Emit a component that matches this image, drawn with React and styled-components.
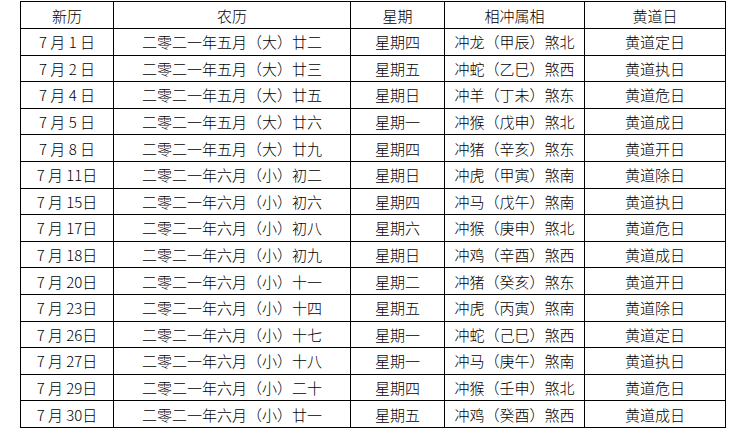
import React from 'react';
import styled, { createGlobalStyle } from 'styled-components';

const GlobalStyle = createGlobalStyle`
  html, body {
    margin: 0;
    padding: 0;
    background: #fff;
  }
`;

const Page = styled.main`
  padding: 1px 0 0 20px;
`;

const Table = styled.table`
  border-collapse: collapse;
  table-layout: fixed;
  width: 706px;
  font-family: "Noto Sans CJK SC", "Liberation Sans", sans-serif;
  font-size: 15px;
  font-weight: 300;
  color: #000;
`;

const Cell = styled.td`
  border: 1px solid #000;
  height: ${(p) => (p.$head ? '26px' : '25.6px')};
  padding: 0;
  text-align: center;
  vertical-align: middle;
  line-height: 1;
  white-space: nowrap;
  font-weight: 300;
`;

const widths = [93, 237, 94, 140, 141];
const head = ['新历', '农历', '星期', '相冲属相', '黄道日'];

const rows = [
  ['7月1日', '二零二一年五月（大）廿二', '星期四', '冲龙（甲辰）煞北', '黄道定日'],
  ['7月2日', '二零二一年五月（大）廿三', '星期五', '冲蛇（乙巳）煞西', '黄道执日'],
  ['7月4日', '二零二一年五月（大）廿五', '星期日', '冲羊（丁未）煞东', '黄道危日'],
  ['7月5日', '二零二一年五月（大）廿六', '星期一', '冲猴（戊申）煞北', '黄道成日'],
  ['7月8日', '二零二一年五月（大）廿九', '星期四', '冲猪（辛亥）煞东', '黄道开日'],
  ['7月11日', '二零二一年六月（小）初二', '星期日', '冲虎（甲寅）煞南', '黄道除日'],
  ['7月15日', '二零二一年六月（小）初六', '星期四', '冲马（戊午）煞南', '黄道执日'],
  ['7月17日', '二零二一年六月（小）初八', '星期六', '冲猴（庚申）煞北', '黄道危日'],
  ['7月18日', '二零二一年六月（小）初九', '星期日', '冲鸡（辛酉）煞西', '黄道成日'],
  ['7月20日', '二零二一年六月（小）十一', '星期二', '冲猪（癸亥）煞东', '黄道开日'],
  ['7月23日', '二零二一年六月（小）十四', '星期五', '冲虎（丙寅）煞南', '黄道除日'],
  ['7月26日', '二零二一年六月（小）十七', '星期一', '冲蛇（己巳）煞西', '黄道定日'],
  ['7月27日', '二零二一年六月（小）十八', '星期一', '冲马（庚午）煞南', '黄道执日'],
  ['7月29日', '二零二一年六月（小）二十', '星期四', '冲猴（壬申）煞北', '黄道危日'],
  ['7月30日', '二零二一年六月（小）廿一', '星期五', '冲鸡（癸酉）煞西', '黄道成日'],
];

// digits in the date column are spaced out like a half-width Song font
const fmtDate = (d) => d.replace(/^(\d+)月(\d+)日$/, '$1 月 $2 日').replace(/ (\d\d) /, ' $1');

export default function App() {
  return (
    <>
      <GlobalStyle />
      <Page>
        <Table>
          <colgroup>
            {widths.map((w, i) => (
              <col key={i} style={{ width: w }} />
            ))}
          </colgroup>
          <thead>
            <tr>
              {head.map((h) => (
                <Cell as="th" key={h} $head>
                  {h}
                </Cell>
              ))}
            </tr>
          </thead>
          <tbody>
            {rows.map((r) => (
              <tr key={r[0]}>
                {r.map((c, i) => (
                  <Cell key={i}>{i === 0 ? fmtDate(c) : c}</Cell>
                ))}
              </tr>
            ))}
          </tbody>
        </Table>
      </Page>
    </>
  );
}
